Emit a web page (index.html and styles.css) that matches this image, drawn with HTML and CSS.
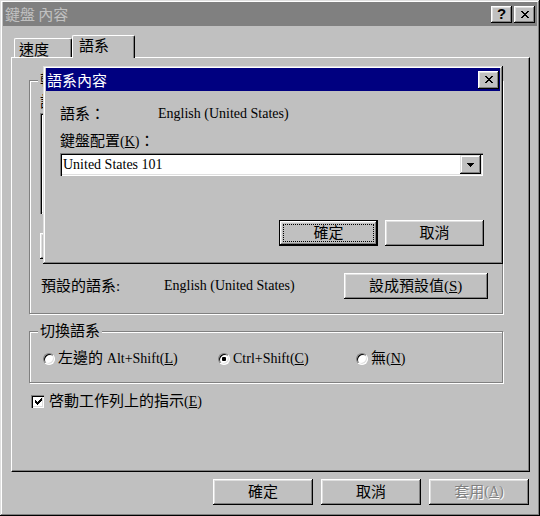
FILE: index.html
```html
<!DOCTYPE html>
<html lang="zh-Hant">
<head>
<meta charset="utf-8">
<title>鍵盤 內容</title>
<link rel="stylesheet" href="styles.css">
</head>
<body>
<div class="window">
  <div class="titlebar inactive">
    <span class="title">鍵盤 內容</span>
    <div class="tb-btns">
      <div class="tbtn help">?</div>
      <div class="tbtn close">
        <svg width="8" height="7" viewBox="0 0 8 7"><path d="M0 0h2v1h1v1h2v-1h1v-1h2v1h-1v1h-1v1h-1v1h1v1h1v1h1v1h-2v-1h-1v-1h-2v1h-1v1h-2v-1h1v-1h1v-1h1v-1h-1v-1h-1v-1h-1z" fill="#000"/></svg>
      </div>
    </div>
  </div>

  <div class="tabs">
    <div class="tab">速度</div>
    <div class="tab active">語系</div>
  </div>

  <div class="panel">
    <div class="group group-langs">
      <span class="group-label clip"><span>輸入</span></span>
      <div class="list-head clip"><span>語系</span></div>
      <div class="listbox"></div>
      <div class="list-btns">
        <div class="btn"></div>
        <div class="btn"></div>
        <div class="btn"></div>
      </div>
      <div class="default-row">
        <span class="dl-label">預設的語系:</span>
        <span class="l dl-value">English (United States)</span>
        <div class="btn btn-setdef">設成預設值(<u>S</u>)</div>
      </div>
    </div>

    <div class="group group-switch">
      <span class="group-label">切換語系</span>
      <div class="radio-item w1"><span class="radio"></span><span>左邊的 <span class="l">Alt+Shift(<u>L</u>)</span></span></div>
      <div class="radio-item w2"><span class="radio checked"></span><span class="l">Ctrl+Shift(<u>C</u>)</span></div>
      <div class="radio-item"><span class="radio"></span><span>無<span class="l">(<u>N</u>)</span></span></div>
    </div>

    <div class="check-row">
      <span class="checkbox">
        <svg width="7" height="7" viewBox="0 0 7 7"><path d="M0 2h1v1h1v1h1v-1h1v-1h1v-1h1v-1h1v3h-1v1h-1v1h-1v1h-1v1h-1v-1h-1v-1h-1z" fill="#000"/></svg>
      </span>
      <span>啓動工作列上的指示<span class="l">(<u>E</u>)</span></span>
    </div>
  </div>

  <div class="actions">
    <div class="btn w100">確定</div>
    <div class="btn w100">取消</div>
    <div class="btn w100 disabled">套用<span class="l">(<u>A</u>)</span></div>
  </div>

  <div class="dialog">
    <div class="titlebar active-title">
      <span class="title">語系內容</span>
      <div class="tbtn close big">
        <svg width="8" height="7" viewBox="0 0 8 7"><path d="M0 0h2v1h1v1h2v-1h1v-1h2v1h-1v1h-1v1h-1v1h1v1h1v1h1v1h-2v-1h-1v-1h-2v1h-1v1h-2v-1h1v-1h1v-1h1v-1h-1v-1h-1v-1h-1z" fill="#000"/></svg>
      </div>
    </div>
    <div class="dlg-body">
      <div class="dlg-row r1"><span class="dlg-label">語系：</span><span class="l">English (United States)</span></div>
      <div class="dlg-row r2"><span>鍵盤配置<span class="l">(<u>K</u>)</span>：</span></div>
      <div class="combo">
        <span class="l combo-text">United States 101</span>
        <div class="combo-btn">
          <svg width="7" height="4" viewBox="0 0 7 4"><path d="M0 0h7v1h-1v1h-1v1h-1v1h-1v-1h-1v-1h-1v-1h-1z" fill="#000"/></svg>
        </div>
      </div>
      <div class="dlg-actions">
        <div class="btn w99 default"><span class="focus">確定</span></div>
        <div class="btn w99">取消</div>
      </div>
    </div>
  </div>
</div>
</body>
</html>
```
FILE: styles.css
```css
* { box-sizing: border-box; }
html, body { margin: 0; padding: 0; }
body {
  background: #c0c0c0;
  font-family: "Liberation Serif", "Noto Sans CJK TC", serif;
  font-size: 15px;
  line-height: 18px;
  color: #000;
}
.l { font-size: 14px; }
u { text-decoration: underline; text-underline-offset: 1px; }

.window {
  position: relative;
  width: 540px;
  height: 516px;
  padding: 2px 3px 3px 3px;
  background: #c0c0c0;
  box-shadow: inset -1px -1px 0 #000, inset 1px 1px 0 #dfdfdf, inset -2px -2px 0 #808080, inset 2px 2px 0 #fff;
}

/* title bars */
.titlebar {
  height: 24px;
  display: flex;
  align-items: center;
  justify-content: space-between;
  padding: 0 2px 0 2px;
  background: #808080;
}
.titlebar .title {
  color: #c0c0c0;
  font-family: "Noto Sans CJK TC", sans-serif;
  font-size: 15px;
  line-height: 18px;
}
.tb-btns { display: flex; gap: 2px; }
.tbtn {
  width: 21px;
  height: 17px;
  background: #c0c0c0;
  display: flex;
  align-items: center;
  justify-content: center;
  box-shadow: inset -1px -1px 0 #000, inset 1px 1px 0 #fff, inset -2px -2px 0 #808080, inset 2px 2px 0 #dfdfdf;
}
.tbtn.help {
  font-family: "Liberation Sans", sans-serif;
  font-weight: bold;
  font-size: 15px;
  line-height: 15px;
  padding-bottom: 1px;
}
.tbtn svg { display: block; }
.active-title { background: #000080; height: 23px; padding: 0 1px 0 1px; }
.active-title .title { color: #fff; }
.tbtn.big { height: 18px; }

/* tabs */
.tabs {
  display: flex;
  align-items: flex-end;
  height: 22px;
  margin: 9px 0 0 8px;
  padding-left: 3px;
  position: relative;
  z-index: 1;
}
.tab {
  width: 58px;
  height: 19px;
  padding: 1px 0 0 4px;
  font-family: "Noto Sans CJK TC", sans-serif;
  border-top: 1px solid #fff;
  border-left: 1px solid #fff;
  border-right: 1px solid #000;
  border-radius: 2px 2px 0 0;
  box-shadow: inset -1px 0 0 #808080;
  background: #c0c0c0;
}
.tab.active {
  width: 63px;
  height: 23px;
  margin-bottom: -1px;
  padding: 0 0 0 6px;
}

/* panel */
.panel {
  margin-left: 8px;
  width: 519px;
  height: 415px;
  border-top: 1px solid #fff;
  border-left: 1px solid #fff;
  border-right: 1px solid #000;
  border-bottom: 1px solid #000;
  box-shadow: inset -1px -1px 0 #808080;
  padding-top: 22px;
}

.group {
  position: relative;
  margin-left: 17px;
  width: 474px;
  border: 1px solid #808080;
  box-shadow: 1px 1px 0 #fff, inset 1px 1px 0 #fff;
}
.group-label {
  position: absolute;
  top: -10px;
  left: 8px;
  padding: 0 2px;
  background: #c0c0c0;
  white-space: nowrap;
}
.clip { overflow: hidden; white-space: nowrap; }
.group-label.clip { width: 5px; padding: 0 0 0 2px; }

.group-langs { padding: 12px 10px 14px 10px; }
.list-head { height: 18px; }
.list-head.clip { width: 3px; }
.listbox {
  margin-top: 2px;
  height: 101px;
  width: 452px;
  background: #fff;
  box-shadow: inset 1px 1px 0 #808080, inset 2px 2px 0 #000, inset -1px -1px 0 #fff, inset -2px -2px 0 #dfdfdf;
}
.list-btns { display: flex; gap: 8px; margin-top: 19px; }
.list-btns .btn { width: 100px; }
.default-row {
  display: flex;
  align-items: center;
  margin-top: 14px;
  height: 26px;
}
.dl-label { width: 124px; padding-left: 1px; }
.btn-setdef { width: 144px; margin-left: 49px; }

.group-switch {
  margin-top: 17px;
  height: 52px;
  display: flex;
  align-items: center;
  padding: 3px 0 0 13px;
}
.radio-item { display: flex; align-items: center; }
.radio-item.w1 { width: 175px; }
.radio-item.w2 { width: 138px; }
.radio {
  position: relative;
  width: 12px;
  height: 12px;
  margin-right: 3px;
  border-radius: 50%;
  border: 1px solid;
  border-color: #808080 #fff #fff #808080;
  background: #fff;
  box-shadow: inset 1px 1px 0 #000, inset -1px -1px 0 #dfdfdf;
}
.radio.checked::after {
  content: "";
  position: absolute;
  left: 3px;
  top: 3px;
  width: 4px;
  height: 4px;
  border-radius: 1px;
  background: #000;
}

.check-row {
  display: flex;
  align-items: center;
  margin: 9px 0 0 19px;
  height: 18px;
}
.checkbox {
  width: 13px;
  height: 13px;
  margin-right: 5px;
  background: #fff;
  display: flex;
  align-items: center;
  justify-content: center;
  padding: 1px 0 0 1px;
  box-shadow: inset 1px 1px 0 #808080, inset 2px 2px 0 #000, inset -1px -1px 0 #fff, inset -2px -2px 0 #dfdfdf;
}
.checkbox svg { display: block; }

/* buttons */
.btn {
  position: relative;
  height: 26px;
  background: #c0c0c0;
  display: flex;
  align-items: center;
  justify-content: center;
  white-space: nowrap;
  box-shadow: inset -1px -1px 0 #000, inset 1px 1px 0 #fff, inset -2px -2px 0 #808080, inset 2px 2px 0 #dfdfdf;
}
.w100 { width: 100px; }
.w99 { width: 99px; }
.btn.disabled { color: #808080; text-shadow: 1px 1px 0 #fff; }
.btn.default {
  box-shadow: inset 0 0 0 1px #000, inset -2px -2px 0 #000, inset 2px 2px 0 #fff, inset -3px -3px 0 #808080, inset 3px 3px 0 #dfdfdf;
}
.btn .focus { display: block; }
.btn.default::after {
  content: "";
  position: absolute;
  left: 4px;
  top: 4px;
  right: 4px;
  bottom: 4px;
  border: 1px dotted #000;
}

.actions {
  display: flex;
  justify-content: flex-end;
  gap: 8px;
  margin: 7px 8px 0 0;
}

/* dialog */
.dialog {
  position: absolute;
  left: 43px;
  top: 66px;
  width: 460px;
  height: 198px;
  padding: 2px 3px 3px 3px;
  background: #c0c0c0;
  z-index: 5;
  box-shadow: inset -1px -1px 0 #000, inset 1px 1px 0 #dfdfdf, inset -2px -2px 0 #808080, inset 2px 2px 0 #fff;
}
.dlg-body { padding: 13px 16px 0 14px; }
.dlg-row { height: 18px; display: flex; align-items: center; }
.dlg-label { width: 98px; }
.dlg-row.r1 { margin-top: 1px; }
.dlg-row.r2 { margin-top: 9px; }
.combo {
  margin-top: 3px;
  height: 23px;
  width: 423px;
  background: #fff;
  display: flex;
  align-items: center;
  justify-content: space-between;
  padding: 2px 2px 2px 3px;
  box-shadow: inset 1px 1px 0 #808080, inset 2px 2px 0 #000, inset -1px -1px 0 #fff, inset -2px -2px 0 #dfdfdf;
}
.combo-btn {
  width: 21px;
  height: 19px;
  background: #c0c0c0;
  display: flex;
  align-items: center;
  justify-content: center;
  box-shadow: inset -1px -1px 0 #000, inset 1px 1px 0 #dfdfdf, inset -2px -2px 0 #808080, inset 2px 2px 0 #fff;
}
.combo-btn svg { display: block; }
.dlg-actions {
  display: flex;
  justify-content: flex-end;
  gap: 7px;
  margin-top: 44px;
}
```
